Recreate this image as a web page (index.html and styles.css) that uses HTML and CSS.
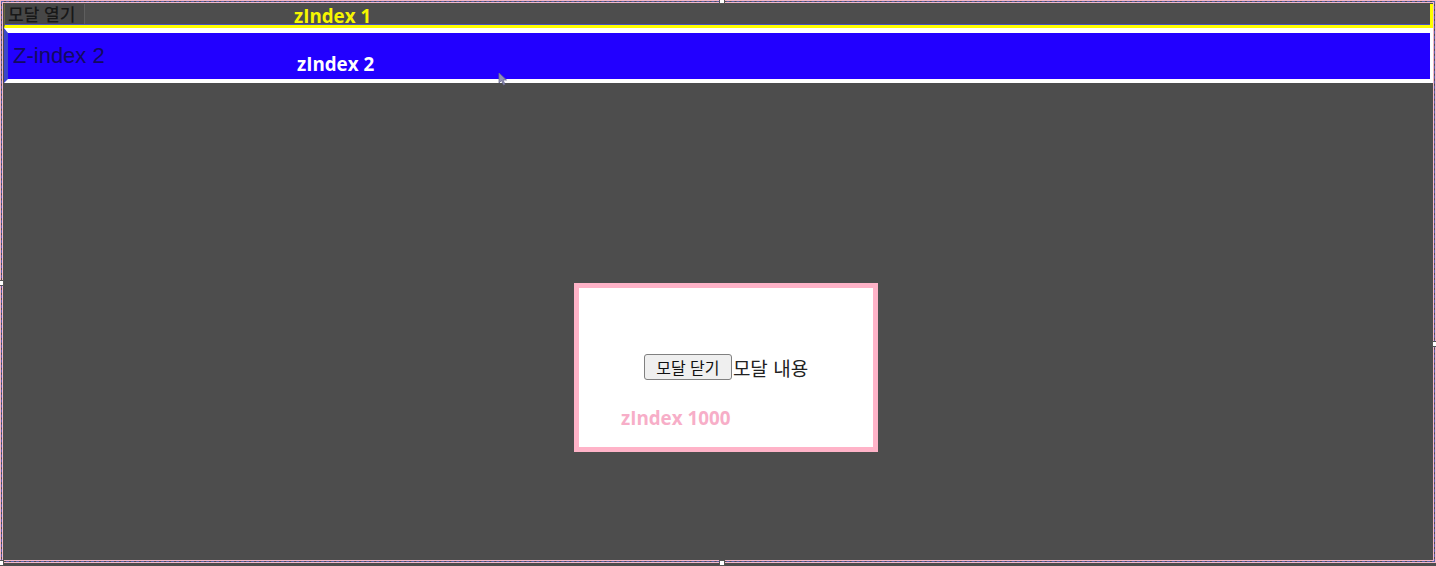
FILE: index.html
```html
<!DOCTYPE html>
<html lang="ko">
<head>
<meta charset="utf-8">
<title>zIndex</title>
<link rel="stylesheet" href="styles.css">
</head>
<body>
<div class="page">
  <header class="z1">
    <button class="open-btn">모달 열기</button>
  </header>
  <section class="z2">
    <span class="z2-text">Z-index 2</span>
  </section>
  <div class="overlay">
    <div class="modal">
      <div class="modal-row">
        <button class="close-btn">모달 닫기</button><span class="modal-text">모달 내용</span>
      </div>
      <span class="tag tag-1000">zIndex 1000</span>
    </div>
  </div>
  <span class="tag tag-1">zIndex 1</span>
  <span class="tag tag-2">zIndex 2</span>
  <svg class="cursor" width="10" height="14" viewBox="0 0 10 14"><path d="M1 1 L1 11 L3.5 8.5 L5.5 13 L7 12.3 L5 8 L8.5 8 Z" fill="#8f8fb8" stroke="#6a6a90" stroke-width="0.8"/></svg>
  <div class="frame"></div>
  <i class="handle h-top"></i>
  <i class="handle h-left"></i>
  <i class="handle h-bl"></i>
  <i class="handle h-bm"></i>
  <i class="handle h-right"></i>
</div>
</body>
</html>
```
FILE: styles.css
```css
html, body {
  margin: 0;
  padding: 0;
  background: #4d4d4d;
}
.page {
  position: relative;
  width: 1436px;
  height: 566px;
  overflow: hidden;
  padding: 4px 2px 0 4px;
  box-sizing: border-box;
  font-family: "Noto Sans CJK KR", "Noto Sans", sans-serif;
}
.z1 {
  height: 21px;
  background: #4d4d4d;
  border-left: 1px solid #6c6a3e;
  border-right: 4px solid #ffff00;
  border-bottom: 3px solid #ffff00;
  box-shadow: inset 0 -1px 0 #4a52c4;
  display: flex;
  align-items: stretch;
}
.open-btn {
  margin: 0;
  padding: 0 9px 0 3px;
  height: 20px;
  border: 0;
  border-right: 1px solid #5e5e5e;
  background: #474747;
  color: #181818;
  font-family: "Noto Sans CJK KR", sans-serif;
  font-size: 17px;
  font-weight: 500;
  line-height: 18px;
}
.z2 {
  height: 46px;
  background: #2200ff;
  border-top: 5px solid #ffffff;
  border-right: 4px solid #ffffff;
  border-bottom: 4px solid #ffffff;
  border-left: 4px solid #3c46c8;
  display: flex;
  align-items: center;
  padding-left: 5px;
}
.z2-text {
  font-family: "Liberation Sans", Arial, sans-serif;
  font-size: 22px;
  color: #120a62;
  margin-top: -1px;
}
.overlay {
  position: absolute;
  inset: 0;
  padding: 283px 0 0 574px;
  display: flex;
  align-items: flex-start;
}
.modal {
  position: relative;
  width: 294px;
  height: 159px;
  background: #ffffff;
  border: 5px solid #ffb3c8;
  display: flex;
  align-items: center;
  justify-content: center;
}
.modal-row {
  display: flex;
  align-items: center;
  margin-top: -1px;
}
.close-btn {
  margin: 0;
  width: 88px;
  height: 26px;
  padding: 0;
  border: 1px solid #808080;
  border-radius: 3px;
  background: #efefef;
  color: #111;
  font-family: "Noto Sans CJK KR", sans-serif;
  font-size: 16px;
  line-height: 22px;
}
.modal-text {
  font-size: 19px;
  color: #222;
  margin-left: 1px;
}
.tag {
  position: absolute;
  font-family: "Open Sans", "Noto Sans", sans-serif;
  font-weight: 700;
  font-size: 18.8px;
  line-height: 20px;
  white-space: nowrap;
}
.tag-1 { left: 294px; top: 6px; color: #f6f600; }
.tag-2 { left: 297px; top: 54px; color: #ffffff; }
.tag-1000 { left: 42px; top: 120px; color: #f7aec8; }
.cursor {
  position: absolute;
  left: 498px;
  top: 72px;
}
.frame {
  position: absolute;
  left: 1px;
  top: 1px;
  width: 1432px;
  height: 559px;
  border: 1px dashed #5b5fae;
  box-shadow: 0 0 0 1px #f4b8c8, inset 0 0 0 1px #f4b8c8;
  pointer-events: none;
}
.handle {
  position: absolute;
  width: 4px;
  height: 4px;
  background: #ffffff;
  border: 1px solid #555;
}
.h-top { left: 719px; top: -2px; }
.h-left { left: -2px; top: 280px; }
.h-bl { left: -2px; top: 560px; }
.h-bm { left: 719px; top: 560px; }
.h-right { left: 1432px; top: 341px; }
```
